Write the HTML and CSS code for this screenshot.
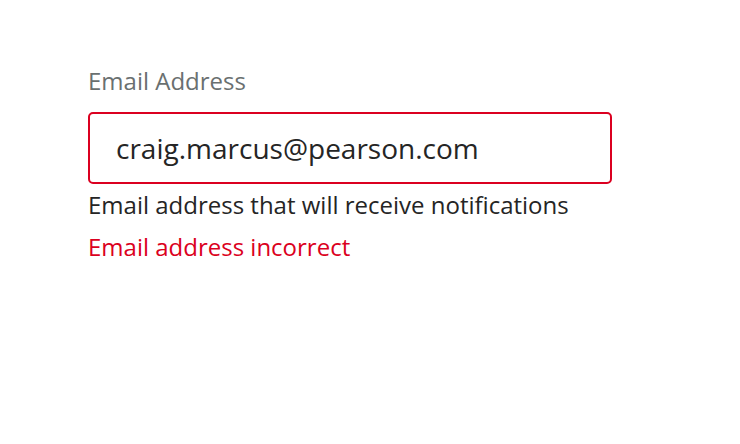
FILE: index.html
```html
<!DOCTYPE html>
<html>
<head>
<meta charset="utf-8">
<link rel="stylesheet" href="styles.css">
</head>
<body>
<div class="field">
  <label class="label" for="email">Email Address</label>
  <input class="input" id="email" type="email" value="craig.marcus@pearson.com">
  <p class="helper">Email address that will receive notifications</p>
  <p class="error">Email address incorrect</p>
</div>
</body>
</html>
```
FILE: styles.css
```css
html, body {
  margin: 0;
  padding: 0;
  background: #ffffff;
}
body {
  font-family: "Open Sans", sans-serif;
}
.field {
  display: flex;
  flex-direction: column;
  align-items: flex-start;
  padding: 64px 0 0 88px;
}
.label {
  font-size: 24px;
  line-height: 34px;
  color: #6a7070;
  margin-bottom: 14px;
}
.input {
  box-sizing: border-box;
  width: 524px;
  height: 72px;
  border: 2px solid #db0020;
  border-radius: 5px;
  padding: 0 26px;
  font-family: "Open Sans", sans-serif;
  font-size: 28px;
  color: #252525;
  outline: none;
  background: #fff;
}
.helper {
  margin: 4px 0 0;
  font-size: 24px;
  line-height: 34px;
  color: #252525;
}
.error {
  margin: 8px 0 0;
  font-size: 24px;
  line-height: 34px;
  color: #db0020;
}
```
